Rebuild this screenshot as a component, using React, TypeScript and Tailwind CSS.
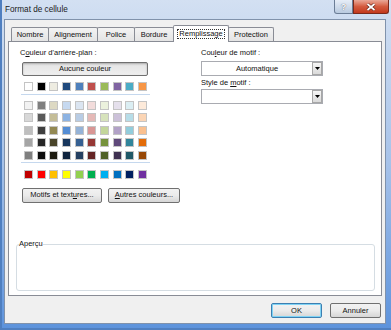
import React from 'react';

const themeRow = ['#ffffff', '#000000', '#eeece1', '#1f497d', '#4f81bd', '#c0504d', '#9bbb59', '#8064a2', '#4bacc6', '#f79646'];

const tintRows = [
    ['#f2f2f2', '#7f7f7f', '#ddd9c3', '#c6d9f0', '#dbe5f1', '#f2dcdb', '#ebf1dd', '#e5e0ec', '#dbeef3', '#fdeada'],
    ['#d8d8d8', '#595959', '#c4bd97', '#8db3e2', '#b8cce4', '#e5b9b7', '#d7e3bc', '#ccc1d9', '#b7dde8', '#fbd5b5'],
    ['#bfbfbf', '#3f3f3f', '#938953', '#548dd4', '#95b3d7', '#d99694', '#c3d69b', '#b2a2c7', '#92cddc', '#fac08f'],
    ['#a5a5a5', '#262626', '#494429', '#17365d', '#366092', '#953734', '#76923c', '#5f497a', '#31859b', '#e36c09'],
    ['#7f7f7f', '#0c0c0c', '#1d1b10', '#0f243e', '#244061', '#632423', '#4f6128', '#3f3151', '#205867', '#974806'],
];

const standardRow = ['#c00000', '#ff0000', '#ffc000', '#ffff00', '#92d050', '#00b050', '#00b0f0', '#0070c0', '#002060', '#7030a0'];

const tabs = [
    { label: 'Nombre', width: 'w-[38px]' },
    { label: 'Alignement', width: 'w-[50px]' },
    { label: 'Police', width: 'w-[38px]' },
    { label: 'Bordure', width: 'w-[40px]' },
    { label: 'Remplissage', width: 'w-[56px]', active: true },
    { label: 'Protection', width: 'w-[46px]' },
];

const SwatchRow: React.FC<{ colors: string[] }> = ({ colors }) => (
    <div className="flex justify-between w-[123px] ml-[4px]">
        {colors.map((c, i) => (
            <div key={i} className="w-[9px] h-[9px] border border-[#c4c4c4]" style={{ backgroundColor: c }} />
        ))}
    </div>
);

const DropButton: React.FC = () => (
    <div className="w-[10px] h-[13px] border border-[#a7a7a7] bg-gradient-to-b from-[#f6f6f6] to-[#dadada] flex items-center justify-center">
        <svg width="5" height="3" viewBox="0 0 5 3">
            <path d="M0 0h5L2.5 3z" fill="#000" />
        </svg>
    </div>
);

const Combo: React.FC<{ value?: string }> = ({ value }) => (
    <div className="h-[15px] w-[122px] border border-[#a9abb1] bg-white flex items-center">
        <div className="flex-1 text-center">{value}</div>
        <DropButton />
    </div>
);

const WinButton: React.FC<{ className?: string; children: React.ReactNode }> = ({ className = '', children }) => (
    <div className={`h-[15px] border rounded-[2px] bg-gradient-to-b from-[#f2f2f2] via-[#ebebeb] to-[#d6d6d6] flex items-center justify-center ${className}`}>
        {children}
    </div>
);

const App: React.FC = () => {
    return (
        <div className="w-[391px] h-[330px] flex flex-col border-l-[2px] border-b-[2px] border-[#4f7fc0] bg-gradient-to-b from-[#d3e0f2] via-[#a6c2e9] to-[#5d93dc] font-['Liberation_Sans',Arial,sans-serif] text-[7.5px] leading-[10px] text-[#111] overflow-hidden">
            {/* title bar */}
            <div className="h-[19px] flex items-start shrink-0">
                <div className="pl-[3px] pt-[5px] text-[8.2px] text-[#1b1b1b]">Format de cellule</div>
                <div className="ml-auto mr-[2px] flex">
                    <div className="w-[19px] h-[14px] border border-[#6b7d96] border-t-0 rounded-bl-[3px] bg-gradient-to-b from-[#e6edf7] to-[#b9cadf] flex items-center justify-center text-[9px] font-bold text-white [text-shadow:0_0_1px_#334]">?</div>
                    <div className="w-[36px] h-[14px] border border-[#7a2a1c] border-t-0 rounded-br-[3px] bg-gradient-to-b from-[#e9a898] via-[#d45b3f] to-[#c2381c] flex items-center justify-center">
                        <svg width="10" height="8" viewBox="0 0 10 8">
                            <path d="M1.5 1l7 6M8.5 1l-7 6" stroke="#5a1a10" strokeWidth="3" />
                            <path d="M1.5 1l7 6M8.5 1l-7 6" stroke="#fff" strokeWidth="1.8" />
                        </svg>
                    </div>
                </div>
            </div>

            {/* client area */}
            <div className="ml-[2px] mr-[5px] h-[305px] border border-[#8092ab] bg-[#f0f0f0] flex flex-col px-[3px] pt-[5px]">
                {/* tabs */}
                <div className="flex items-end h-[17px] -mb-px ml-[3px] relative z-10">
                    {tabs.map((t, i) =>
                        t.active ? (
                            <div key={t.label} className={`${t.width} h-[17px] -ml-px border border-b-0 border-[#898c95] rounded-t-[2px] bg-white flex items-start justify-center pt-[3px]`}>
                                <span className="border border-dotted border-[#333] px-[1px] leading-[8px]">{t.label}</span>
                            </div>
                        ) : (
                            <div key={t.label} className={`${t.width} h-[14px] mb-px ${i === 0 ? '' : '-ml-px'} border border-b-0 border-[#898c95] rounded-t-[2px] bg-gradient-to-b from-[#f3f3f3] to-[#e4e4e4] flex items-center justify-center`}>
                                {t.label}
                            </div>
                        )
                    )}
                </div>

                {/* panel */}
                <div className="h-[255px] border border-[#898c95] bg-white flex flex-col">
                    <div className="flex pl-[11px] pt-[6px]">
                        <div className="w-[181px] flex flex-col">
                            <div>C<span className="underline">o</span>uleur d'arrière-plan :</div>
                            <div className="mt-[4px] ml-[2px] w-[126px] h-[14px] border border-[#707070] rounded-[2px] bg-gradient-to-b from-[#e4e4e4] to-[#efefef] shadow-[inset_0_1px_2px_rgba(0,0,0,0.25)] flex items-center justify-center">
                                Aucune couleur
                            </div>
                            <div className="mt-[6px]">
                                <SwatchRow colors={themeRow} />
                            </div>
                            <div className="mt-[3px] ml-[1px] w-[129px] h-px bg-[#c5d8ee]" />
                            <div className="mt-[6px] flex flex-col gap-[3.4px]">
                                {tintRows.map((row, i) => (
                                    <SwatchRow key={i} colors={row} />
                                ))}
                            </div>
                            <div className="mt-[2px] ml-[1px] w-[129px] h-px bg-[#c5d8ee]" />
                            <div className="mt-[7.4px]">
                                <SwatchRow colors={standardRow} />
                            </div>
                            <div className="mt-[9px] ml-[2px] flex gap-[6px]">
                                <WinButton className="w-[80px] border-[#707070]">
                                    Motifs et text<span className="underline">u</span>res...
                                </WinButton>
                                <WinButton className="w-[72px] border-[#707070]">
                                    <span className="underline">A</span>utres couleurs...
                                </WinButton>
                            </div>
                        </div>
                        <div className="flex flex-col">
                            <div>Cou<span className="underline">l</span>eur de motif :</div>
                            <div className="mt-[3px]">
                                <Combo value="Automatique" />
                            </div>
                            <div className="mt-[2px]">Style de <span className="underline">m</span>otif :</div>
                            <div className="mt-[1px]">
                                <Combo />
                            </div>
                        </div>
                    </div>

                    <fieldset className="mt-auto mb-[4px] ml-[7px] w-[359px] h-[52px] border border-[#d5dde3] rounded-[3px]">
                        <legend className="ml-[2px] leading-[10px]">Aperçu</legend>
                    </fieldset>
                </div>

                {/* dialog buttons */}
                <div className="mt-[7px] flex justify-end gap-[8px] pr-[1px]">
                    <WinButton className="w-[51px] border-[#3c7fb1] shadow-[inset_0_0_0_1px_#7fd3f5]">OK</WinButton>
                    <WinButton className="w-[51px] border-[#707070]">Annuler</WinButton>
                </div>
            </div>
        </div>
    );
};

export default App;
